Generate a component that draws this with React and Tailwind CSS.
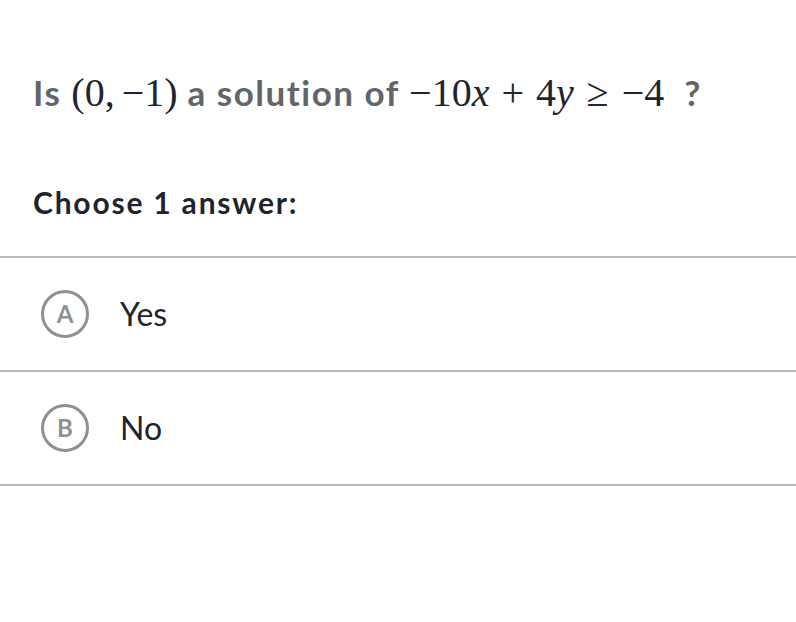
import React from 'react';

const CHOICES = [
  { letter: 'A', text: 'Yes' },
  { letter: 'B', text: 'No' },
];

function Tex({ children }) {
  return (
    <span className="font-['Liberation_Serif',serif] font-normal text-[40px] tracking-normal text-[#21242c]">
      {children}
    </span>
  );
}

function Sp({ w }) {
  return <span className="inline-block" style={{ width: w }} />;
}

export default function App() {
  return (
    <div className="w-[796px] h-[622px] bg-white font-['Lato',sans-serif]">
      {/* question */}
      <div className="pt-[66px] px-[33px]">
        <p className="text-[35px] font-bold tracking-[1.5px] text-[#626569] leading-[52px] whitespace-nowrap">
          Is{' '}
          <Tex>
            (0,<Sp w={7} />−1)
          </Tex>{' '}
          a solution of{' '}
          <Tex>
            −10<i>x</i>
            <Sp w={12} />+<Sp w={12} />4<i>y</i>
            <Sp w={13} />≥<Sp w={13} />−4
          </Tex>
          <Sp w={10} /> ?
        </p>
      </div>

      <div className="mt-[64px] px-[33px]">
        <p className="text-[30px] font-bold tracking-[1.8px] text-[#21242c] leading-[38px]">Choose 1 answer:</p>
      </div>

      {/* answers */}
      <div className="mt-[35px] border-t-2 border-[#bababe]">
        {CHOICES.map((c) => (
          <div key={c.letter} className="h-[114px] flex items-center border-b-2 border-[#bababe] pl-[41px]">
            <div className="w-[48px] h-[48px] rounded-full border-[3px] border-[#8e9094] flex items-center justify-center text-[#8e9094] text-[24px] font-bold">
              {c.letter}
            </div>
            <span className="ml-[31px] text-[32px] text-[#21242c]">{c.text}</span>
          </div>
        ))}
      </div>
    </div>
  );
}
